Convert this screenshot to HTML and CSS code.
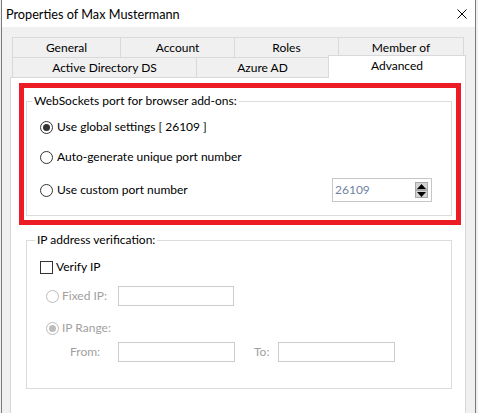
FILE: index.html
```html
<!DOCTYPE html>
<html>
<head>
<meta charset="utf-8">
<link rel="stylesheet" href="styles.css">
</head>
<body>
<div class="window">
  <div class="titlebar">
    <span class="title">Properties of Max Mustermann</span>
    <svg class="close" width="10" height="10" viewBox="0 0 10 10"><path d="M0.5 0.5 L9.5 9.5 M9.5 0.5 L0.5 9.5" stroke="#000" stroke-width="1" fill="none"/></svg>
  </div>
  <div class="client">
    <div class="tabs">
      <div class="tabrow">
        <div class="tab w-general">General</div>
        <div class="tab w-account">Account</div>
        <div class="tab w-roles">Roles</div>
        <div class="tab w-member last">Member of</div>
      </div>
      <div class="tabrow">
        <div class="tab w-ad">Active Directory DS</div>
        <div class="tab w-azure">Azure AD</div>
        <div class="tab w-adv selected">Advanced</div>
      </div>
    </div>
    <div class="panel">
      <div class="highlight">
        <fieldset class="group g1">
          <legend class="legend">WebSockets port for browser add-ons:</legend>
          <div class="group-body body1">
            <div class="row r1"><span class="radio checked"></span><span class="label">Use global settings [ 26109 ]</span></div>
            <div class="row r2"><span class="radio"></span><span class="label">Auto-generate unique port number</span></div>
            <div class="row r3"><span class="radio"></span><span class="label">Use custom port number</span>
              <div class="spinner"><span class="spin-value">26109</span>
                <div class="spin-buttons">
                  <span class="spin-btn"><svg width="9" height="5" viewBox="0 0 9 5"><path d="M4.5 0 L9 5 L0 5 Z" fill="#000"/></svg></span>
                  <span class="spin-btn"><svg width="9" height="5" viewBox="0 0 9 5"><path d="M0 0 L9 0 L4.5 5 Z" fill="#000"/></svg></span>
                </div>
              </div>
            </div>
          </div>
        </fieldset>
      </div>
      <fieldset class="group g2">
        <legend class="legend legend2">IP address verification:</legend>
        <div class="group-body body2">
          <div class="row c1"><span class="checkbox"></span><span class="label cb-label">Verify IP</span></div>
          <div class="row c2"><span class="radio disabled"></span><span class="label dis l-fixed">Fixed IP:</span><span class="textbox tb-fixed"></span></div>
          <div class="row c3"><span class="radio disabled checked"></span><span class="label dis">IP Range:</span></div>
          <div class="row c4"><span class="label dis l-from">From:</span><span class="textbox tb-range"></span><span class="label dis l-to">To:</span><span class="textbox tb-range"></span></div>
        </div>
      </fieldset>
    </div>
  </div>
</div>
</body>
</html>
```
FILE: styles.css
```css
* { box-sizing: border-box; }
html, body { margin: 0; padding: 0; }
body {
  background: #f0f0f0;
  font-family: Lato, "Open Sans", sans-serif;
  font-size: 12px;
  line-height: 16px;
  color: #000;
  width: 478px;
  height: 413px;
  overflow: hidden;
}
.window {
  width: 475px;
  height: 413px;
  margin-left: 1px;
  border-left: 1px solid #7a7a7a;
  border-right: 1px solid #7a7a7a;
  background: #f0f0f0;
}
.titlebar {
  height: 27px;
  background: #fff;
  display: flex;
  align-items: center;
  padding-left: 4px;
  padding-right: 8px;
}
.title { font-size: 12.7px; }
.close { margin-left: auto; margin-top: 1px; }
.client { padding-top: 10px; padding-left: 8px; }
.tabs { margin-left: 2px; }
.tabrow { display: flex; height: 20px; }
.tab {
  height: 20px;
  border-top: 1px solid #d9d9d9;
  border-left: 1px solid #d9d9d9;
  background: #f0f0f0;
  display: flex;
  align-items: center;
  justify-content: center;
  padding-top: 1px;
}
.tab.last { border-right: 1px solid #d9d9d9; }
.w-general { width: 108px; }
.w-account { width: 114px; }
.w-roles { width: 104px; }
.w-member { width: 126px; }
.w-ad { width: 184px; }
.w-azure { width: 132px; }
.w-adv { width: 138px; }
.tab.selected {
  position: relative;
  z-index: 1;
  margin-top: -2px;
  height: 23px;
  background: #fff;
  border-right: 1px solid #d9d9d9;
  padding-top: 0;
  padding-bottom: 2px;
}
.panel {
  width: 456px;
  height: 340px;
  background: #fff;
  border: 1px solid #d9d9d9;
  padding-top: 5px;
}
.highlight {
  margin-left: 8px;
  width: 442px;
  border: 5px solid #ed1c24;
  padding: 5px 0 4px 2px;
}
.group {
  margin: 0;
  padding: 0;
  width: 426px;
  border: 1px solid #dcdcdc;
  min-inline-size: 0;
}
.g2 { margin: 7px 0 0 15px; }
.legend { margin-left: 5px; padding: 0 2px; line-height: 16px; }
.legend2 { margin-left: 8px; }
.group-body { padding-left: 13px; }
.body1 { padding-top: 8px; padding-bottom: 13px; }
.body2 { padding-top: 9px; padding-bottom: 26px; }
.row { display: flex; align-items: center; height: 20px; }
.r2 { margin-top: 10px; }
.r3 { margin-top: 11px; height: 24px; }
.c2 { margin-top: 9px; }
.c3 { margin-top: 12px; }
.c4 { margin-top: 4px; }
.radio {
  width: 13px;
  height: 13px;
  border: 1px solid #333;
  border-radius: 50%;
  background: #fff;
  display: flex;
  align-items: center;
  justify-content: center;
  flex: none;
}
.radio.checked::after {
  content: "";
  width: 7px;
  height: 7px;
  border-radius: 50%;
  background: #333;
}
.radio.disabled { border-color: #bcbcbc; margin-left: 6px; }
.radio.disabled.checked::after { background: #bcbcbc; }
.label { margin-left: 4px; white-space: nowrap; }
.cb-label { margin-left: 3px; }
.radio.disabled + .label { margin-left: 3px; }
.dis { color: #a0a0a0; }
.checkbox {
  width: 13px;
  height: 13px;
  border: 1px solid #333;
  background: #fff;
  flex: none;
}
.l-fixed { width: 56px; }
.l-from { margin-left: 30px; width: 48px; }
.l-to { margin-left: 19px; width: 24px; }
.textbox { height: 20px; border: 1px solid #cccccc; background: #fff; }
.tb-fixed { width: 116px; }
.tb-range { width: 117px; }
.spinner {
  margin-left: auto;
  margin-right: 19px;
  width: 100px;
  height: 24px;
  border: 1px solid #c6c6c6;
  display: flex;
  align-items: center;
  padding-left: 2px;
  padding-right: 3px;
}
.spin-value { color: #7283a3; }
.spin-buttons { margin-left: auto; display: flex; flex-direction: column; }
.spin-btn {
  width: 13px;
  height: 8px;
  background: #d4d4d4;
  border: 1px solid #a8a8a8;
  display: flex;
  align-items: center;
  justify-content: center;
}
.spin-btn svg { display: block; }
```
